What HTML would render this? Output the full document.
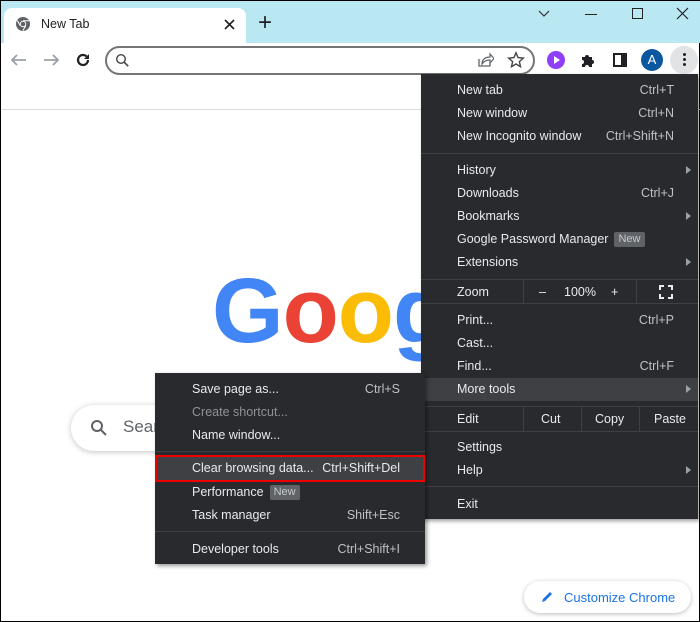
<!DOCTYPE html>
<html><head><meta charset="utf-8"><style>
*{box-sizing:border-box;margin:0;padding:0}
body{width:700px;height:622px;overflow:hidden;background:#fff;font-family:"Liberation Sans",sans-serif;position:relative;border:1px solid #000}
.abs{position:absolute}
.m{position:absolute;background:#292a2d;color:#e8eaed;font-size:12.5px;box-shadow:2px 2px 4px rgba(0,0,0,.4)}
.it{position:absolute;left:0;right:0;height:23px;line-height:23px}
.it .l{position:absolute}
.it .r{position:absolute;color:#bdc1c6}
.sep{position:absolute;left:0;right:0;height:1px;background:#3f4044}
.arr{position:absolute;width:0;height:0;border-left:5px solid #9aa0a6;border-top:4px solid transparent;border-bottom:4px solid transparent;top:7px}
.badge{display:inline-block;background:#5f6368;color:#c7c9cc;font-size:11px;line-height:15px;padding:0 4px;border-radius:2px;margin-left:6px;vertical-align:1px}
.vd{position:absolute;width:1px;background:#3f4044}
</style></head><body>
<!-- tab strip -->
<div class="abs" style="left:0;top:0;width:700px;height:42px;background:#b9e7f2"></div>
<div class="abs" style="left:3px;top:7px;width:242px;height:36px;background:#fff;border-radius:8px 8px 0 0"></div>
<svg class="abs" style="left:14px;top:15px" width="16" height="16" viewBox="0 0 16 16"><circle cx="8" cy="8" r="7" fill="#5f6368"/><circle cx="8" cy="8" r="3.2" fill="#fff"/><circle cx="8" cy="8" r="2.3" fill="#5f6368"/><path d="M8 4.8h6M5.2 9.6L2.3 4.5M10.8 9.6L7.8 14.8" stroke="#fff" stroke-width="1"/></svg>
<div class="abs" style="left:40px;top:16px;font-size:12.5px;color:#202124">New Tab</div>
<svg class="abs" style="left:223px;top:18px" width="11" height="11"><path d="M1 1l9 9M10 1L1 10" stroke="#202124" stroke-width="1.6"/></svg>
<div class="abs" style="left:257px;top:8px;font-size:24px;color:#202124;font-weight:300">+</div>
<svg class="abs" style="left:536px;top:8px" width="14" height="10"><path d="M2 2l5 5 5-5" fill="none" stroke="#333" stroke-width="1.2"/></svg>
<div class="abs" style="left:584px;top:13px;width:12px;height:1px;background:#222"></div>
<div class="abs" style="left:631px;top:7px;width:11px;height:11px;border:1.2px solid #222"></div>
<svg class="abs" style="left:675px;top:6px" width="13" height="13"><path d="M1 1l11 11M12 1L1 12" stroke="#222" stroke-width="1.2"/></svg>
<!-- toolbar -->
<svg class="abs" style="left:8px;top:51px" width="20" height="16"><path d="M17 8H3M8 3L3 8l5 5" fill="none" stroke="#9aa0a6" stroke-width="1.8"/></svg>
<svg class="abs" style="left:40px;top:51px" width="20" height="16"><path d="M3 8h14M12 3l5 5-5 5" fill="none" stroke="#9aa0a6" stroke-width="1.8"/></svg>
<svg class="abs" style="left:73px;top:50px" width="18" height="18"><path d="M14 9a5 5 0 1 1-1.5-3.6" fill="none" stroke="#202124" stroke-width="2.2"/><path d="M15 3v5h-5z" fill="#202124"/></svg>
<div class="abs" style="left:104px;top:45px;width:430px;height:29px;border:2px solid #757575;border-radius:15px"></div>
<svg class="abs" style="left:114px;top:52px" width="15" height="15"><circle cx="6" cy="6" r="4.3" fill="none" stroke="#444" stroke-width="1.4"/><path d="M9.2 9.2l4 4" stroke="#444" stroke-width="1.6"/></svg>
<svg class="abs" style="left:475px;top:50px" width="18" height="18"><path d="M3 8v7h11v-3" fill="none" stroke="#5f6368" stroke-width="1.3"/><path d="M6 13c0-5 4-7 8-7V3l4 4.5-4 4.5V9c-3 0-6 1-8 4z" fill="none" stroke="#5f6368" stroke-width="1.2"/></svg>
<svg class="abs" style="left:506px;top:50px" width="18" height="18"><path d="M9 1.8l2.1 4.8 5.2.5-3.9 3.5 1.1 5.1L9 13l-4.5 2.7 1.1-5.1-3.9-3.5 5.2-.5z" fill="none" stroke="#444" stroke-width="1.4"/></svg>
<div class="abs" style="left:546px;top:50px;width:18px;height:18px;border-radius:50%;background:#8f3ff5"></div>
<svg class="abs" style="left:546px;top:50px" width="18" height="18"><path d="M7 5v8l6-4z" fill="#fff"/></svg>
<svg class="abs" style="left:578px;top:50px" width="18" height="18"><path d="M3 6h3a2 2 0 1 1 4 0h3v3a2 2 0 1 1 0 4v3h-3a2 2 0 1 0-4 0H3v-3a2 2 0 1 0 0-4z" fill="#202124"/></svg>
<div class="abs" style="left:612px;top:52px;width:14px;height:14px;border:2px solid #202124;border-right-width:6px"></div>
<div class="abs" style="left:640px;top:48px;width:22px;height:22px;border-radius:50%;background:#0b57a0;color:#fff;font-size:13px;text-align:center;line-height:22px">A</div>
<div class="abs" style="left:669px;top:45px;width:28px;height:28px;border-radius:50%;background:#e2e3e5"></div>
<div class="abs" style="left:682px;top:52px;width:3px;height:3px;background:#202124;border-radius:50%;box-shadow:0 5px 0 #202124,0 10px 0 #202124"></div>
<div class="abs" style="left:0;top:108px;width:700px;height:1px;background:#dadce0"></div>
<!-- google -->
<div class="abs" style="left:211px;top:258px;font-size:92px;font-weight:bold;letter-spacing:-1px;font-family:'Liberation Sans',sans-serif"><span style="color:#4285f4">G</span><span style="color:#ea4335">o</span><span style="color:#fbbc05">o</span><span style="color:#4285f4">g</span></div>
<div class="abs" style="left:70px;top:404px;width:400px;height:46px;border-radius:23px;background:#fff;box-shadow:0 1px 6px rgba(32,33,36,.28)"></div>
<svg class="abs" style="left:89px;top:418px" width="18" height="18"><circle cx="7" cy="7" r="5" fill="none" stroke="#5f6368" stroke-width="2"/><path d="M11 11l5 5" stroke="#5f6368" stroke-width="2"/></svg>
<div class="abs" style="left:122px;top:416px;font-size:17px;color:#5f6368">Search</div>
<div class="abs" style="left:523px;top:580px;width:167px;height:32px;border-radius:16px;background:#fff;box-shadow:0 1px 4px rgba(32,33,36,.3)"></div>
<svg class="abs" style="left:539px;top:589px" width="14" height="14"><path d="M2 12l1-3 7-7 2 2-7 7z" fill="#1a73e8"/></svg>
<div class="abs" style="left:563px;top:589px;font-size:13px;color:#1a73e8">Customize Chrome</div>
<!-- main menu -->
<div class="m" style="left:420px;top:73px;width:277px;height:445px">
<div class="it" style="top:5px"><span class="l" style="left:36px">New tab</span><span class="r" style="right:24px">Ctrl+T</span></div>
<div class="it" style="top:28px"><span class="l" style="left:36px">New window</span><span class="r" style="right:24px">Ctrl+N</span></div>
<div class="it" style="top:51px"><span class="l" style="left:36px">New Incognito window</span><span class="r" style="right:24px">Ctrl+Shift+N</span></div>
<div class="sep" style="top:79px"></div>
<div class="it" style="top:85px"><span class="l" style="left:36px">History</span><span class="arr" style="right:7px"></span></div>
<div class="it" style="top:108px"><span class="l" style="left:36px">Downloads</span><span class="r" style="right:24px">Ctrl+J</span></div>
<div class="it" style="top:131px"><span class="l" style="left:36px">Bookmarks</span><span class="arr" style="right:7px"></span></div>
<div class="it" style="top:154px"><span class="l" style="left:36px">Google Password Manager<span class="badge">New</span></span></div>
<div class="it" style="top:177px"><span class="l" style="left:36px">Extensions</span><span class="arr" style="right:7px"></span></div>
<div class="sep" style="top:205px"></div>
<div class="it" style="top:207px"><span class="l" style="left:36px">Zoom</span><span class="l" style="left:118px">–</span><span class="l" style="left:143px">100%</span><span class="l" style="left:190px">+</span></div>
<svg class="abs" style="left:238px;top:211px" width="14" height="14"><path d="M1 5V1h4M9 1h4v4M13 9v4H9M5 13H1V9" fill="none" stroke="#e8eaed" stroke-width="2"/></svg>
<div class="vd" style="left:102px;top:205px;height:24px"></div>
<div class="vd" style="left:215px;top:205px;height:24px"></div>
<div class="sep" style="top:229px"></div>
<div class="it" style="top:235px"><span class="l" style="left:36px">Print...</span><span class="r" style="right:24px">Ctrl+P</span></div>
<div class="it" style="top:258px"><span class="l" style="left:36px">Cast...</span></div>
<div class="it" style="top:281px"><span class="l" style="left:36px">Find...</span><span class="r" style="right:24px">Ctrl+F</span></div>
<div class="it" style="top:304px;background:#3f4043"><span class="l" style="left:36px">More tools</span><span class="arr" style="right:7px"></span></div>
<div class="sep" style="top:332px"></div>
<div class="it" style="top:334px"><span class="l" style="left:36px">Edit</span><span class="l" style="left:120px">Cut</span><span class="l" style="left:174px">Copy</span><span class="l" style="left:233px">Paste</span></div>
<div class="vd" style="left:102px;top:332px;height:25px"></div>
<div class="vd" style="left:160px;top:332px;height:25px"></div>
<div class="vd" style="left:218px;top:332px;height:25px"></div>
<div class="sep" style="top:357px"></div>
<div class="it" style="top:362px"><span class="l" style="left:36px">Settings</span></div>
<div class="it" style="top:385px"><span class="l" style="left:36px">Help</span><span class="arr" style="right:7px"></span></div>
<div class="sep" style="top:412px"></div>
<div class="it" style="top:419px"><span class="l" style="left:36px">Exit</span></div>
</div>
<!-- submenu -->
<div class="m" style="left:154px;top:372px;width:270px;height:191px">
<div class="it" style="top:5px"><span class="l" style="left:37px">Save page as...</span><span class="r" style="right:25px">Ctrl+S</span></div>
<div class="it" style="top:28px"><span class="l" style="left:37px;color:#8e9196">Create shortcut...</span></div>
<div class="it" style="top:51px"><span class="l" style="left:37px">Name window...</span></div>
<div class="sep" style="top:78px"></div>
<div class="it" style="top:82px;height:27px;line-height:23px;background:#3f4043;border:2px solid #e00"><span class="l" style="left:35px">Clear browsing data...</span><span class="r" style="right:23px;color:#e8eaed">Ctrl+Shift+Del</span></div>
<div class="it" style="top:108px"><span class="l" style="left:37px">Performance<span class="badge">New</span></span></div>
<div class="it" style="top:131px"><span class="l" style="left:37px">Task manager</span><span class="r" style="right:25px">Shift+Esc</span></div>
<div class="sep" style="top:158px"></div>
<div class="it" style="top:165px"><span class="l" style="left:37px">Developer tools</span><span class="r" style="right:25px">Ctrl+Shift+I</span></div>
</div>
</body></html>
